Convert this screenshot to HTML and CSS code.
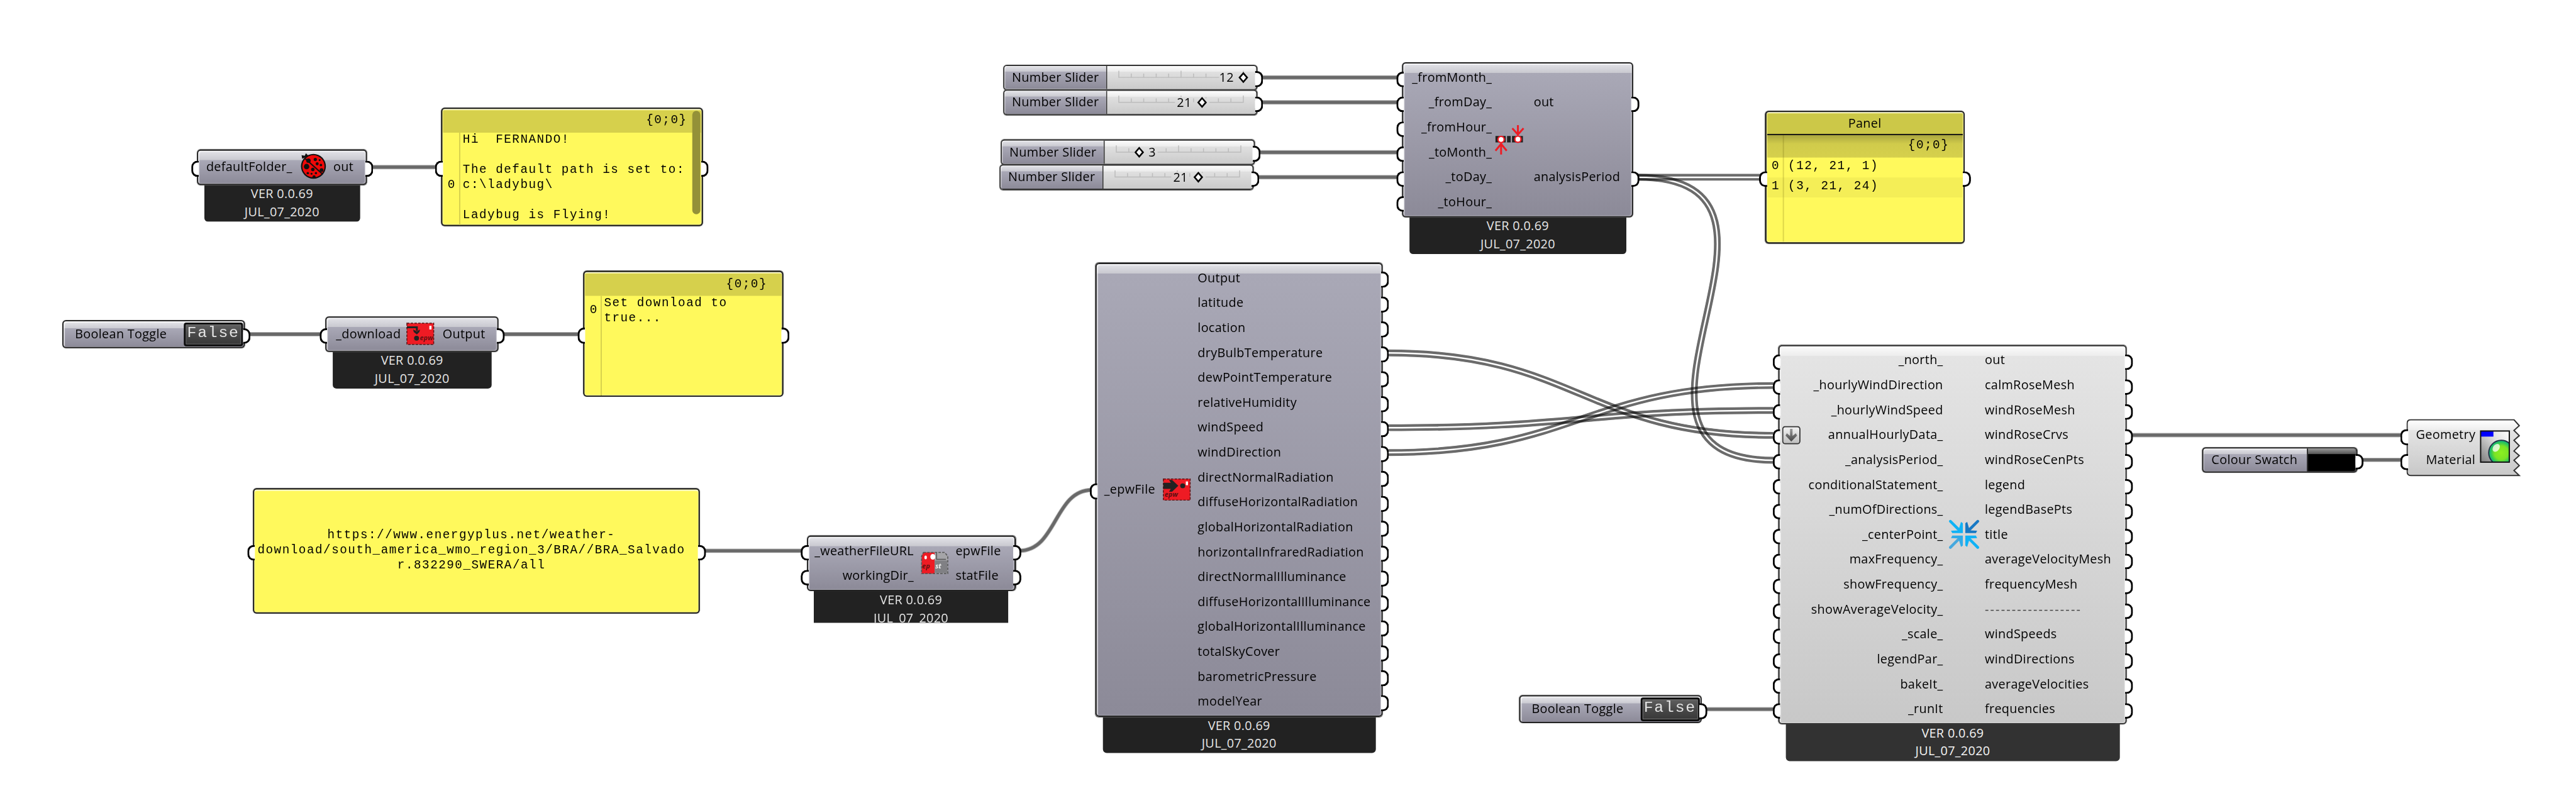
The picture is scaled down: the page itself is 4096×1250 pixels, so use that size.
FILE: index.html
```html
<!DOCTYPE html>
<html lang="en">
<head>
<meta charset="utf-8">
<title>Ladybug wind rose definition</title>
<link rel="stylesheet" href="styles.css">
</head>
<body>
<main class="canvas">

<svg class="wires" viewBox="0 0 4134 1262" width="4134" height="1262" aria-hidden="true">
  <defs>
    <path id="w-panel" d="M2628 284.6H2825"/>
    <path id="w-period" d="M2628 284.6C2948 284.6 2527 739 2847 739"/>
    <path id="w-dry" d="M2228 566.7C2530 566.7 2544 699 2846 699"/>
    <path id="w-speed" d="M2228 686.7C2530 686.7 2544 659 2846 659"/>
    <path id="w-dir" d="M2228 726.7C2530 726.7 2544 619 2846 619"/>
    <mask id="m-panel" maskUnits="userSpaceOnUse" x="0" y="0" width="4134" height="1262"><use href="#w-panel" class="keep"/><use href="#w-panel" class="cut"/></mask>
    <mask id="m-period" maskUnits="userSpaceOnUse" x="0" y="0" width="4134" height="1262"><use href="#w-period" class="keep"/><use href="#w-period" class="cut"/></mask>
    <mask id="m-dry" maskUnits="userSpaceOnUse" x="0" y="0" width="4134" height="1262"><use href="#w-dry" class="keep"/><use href="#w-dry" class="cut"/></mask>
    <mask id="m-speed" maskUnits="userSpaceOnUse" x="0" y="0" width="4134" height="1262"><use href="#w-speed" class="keep"/><use href="#w-speed" class="cut"/></mask>
    <mask id="m-dir" maskUnits="userSpaceOnUse" x="0" y="0" width="4134" height="1262"><use href="#w-dir" class="keep"/><use href="#w-dir" class="cut"/></mask>
    <path id="singles" d="M596 268.3H702M398 536.6H516M806 536.6H930M1129 884.3H1288M2023 124.4H2244M2023 164.4H2244M2019 244.5H2244M2017 284.5H2244M2737 1138.7H2848M3419 698.6H3856M3789 738.4H3856M1636 884.3C1696 884.3 1692 786.7 1752 786.7"/>
  </defs>
  <use href="#singles" class="wire-edge"/>
  <use href="#singles" class="wire"/>
  <g class="list-wire">
    <g mask="url(#m-panel)"><use href="#w-panel"/></g>
    <g mask="url(#m-period)"><use href="#w-period"/></g>
    <g mask="url(#m-dry)"><use href="#w-dry"/></g>
    <g mask="url(#m-speed)"><use href="#w-speed"/></g>
    <g mask="url(#m-dir)"><use href="#w-dir"/></g>
  </g>
</svg>

<section class="component default-folder">
  <div class="body">
    <div class="ports inputs"><div class="port in">defaultFolder_</div></div>
    <svg class="icon" viewBox="0 0 44 44" width="44" height="44">
      <path d="M5 10 4 4l5 1 2-4 4 4" fill="#111"/>
      <circle cx="23" cy="22" r="20" fill="#111"/>
      <circle cx="23" cy="22" r="17.8" fill="#f00808"/>
      <path d="M10 10 38 35" stroke="#111" stroke-width="2"/>
      <g fill="#111"><circle cx="15" cy="13" r="3.6"/><circle cx="26" cy="11" r="2.6"/><circle cx="29" cy="18" r="2.4"/><circle cx="12" cy="22.500" r="4.4"/><circle cx="22" cy="27" r="2.800"/><circle cx="14" cy="33" r="2"/><circle cx="20" cy="34" r="1.600"/><circle cx="35" cy="20" r="2"/><circle cx="36" cy="28" r="3"/><circle cx="27" cy="33" r="1.800"/><circle cx="24" cy="39" r="2.500"/><circle cx="33" cy="12" r="1.600"/></g>
    </svg>
    <div class="ports outputs"><div class="port out">out</div></div>
  </div>
  <div class="version"><span>VER 0.0.69</span><span>JUL_07_2020</span></div>
</section>

<section class="panel panel-folder grip-in grip-out">
  <div class="path">{0;0}</div>
  <div class="item"><span class="index">0</span><pre>Hi  FERNANDO!

The default path is set to:
c:\ladybug\

Ladybug is Flying!</pre></div>
  <div class="scrollbar"></div>
</section>

<section class="toggle toggle-download grip-out"><span>Boolean Toggle</span><b>False</b></section>

<section class="component download">
  <div class="body">
    <div class="ports inputs"><div class="port in">_download</div></div>
    <svg class="icon" viewBox="0 0 45 36" width="45" height="36">
      <rect x="1" y="1" width="43" height="34" fill="#ee1b24" stroke="#5b1416" stroke-width="1.500" stroke-dasharray="4 2"/>
      <path d="M1 7.500H17V13" fill="none" stroke="#222" stroke-width="3"/><path d="M11 11 17 14 22 11 21 15 17 19 12 15Z" fill="#222"/>
      <circle cx="16.500" cy="25" r="4" fill="#222"/><rect x="37" y="5" width="3.500" height="6" fill="#fff"/>
      <text x="22" y="28" class="icon-text">epw</text>
    </svg>
    <div class="ports outputs"><div class="port out">Output</div></div>
  </div>
  <div class="version"><span>VER 0.0.69</span><span>JUL_07_2020</span></div>
</section>

<section class="panel panel-download grip-in grip-out">
  <div class="path">{0;0}</div>
  <div class="item"><span class="index">0</span><pre>Set download to
true...</pre></div>
</section>

<section class="panel panel-url grip-in grip-out">
  <pre>https://www.energyplus.net/weather-
download/south_america_wmo_region_3/BRA//BRA_Salvado
r.832290_SWERA/all</pre>
</section>

<section class="component weather">
  <div class="body">
    <div class="ports inputs"><div class="port in">_weatherFileURL</div><div class="port in">workingDir_</div></div>
    <svg class="icon" viewBox="0 0 44 36" width="44" height="36">
      <path d="M4 1H22V35H1V7Z" fill="#ee1b24"/><path d="M22 1H38L43 7V35H22Z" fill="#a5a5a8"/>
      <path d="M22 14H42V34H22Z" fill="#808084"/>
      <path d="M4 1H38L43 7V35H1V7Z" fill="none" stroke="#555" stroke-width="1.600" stroke-dasharray="4 2"/>
      <path d="M25 1V12H40" fill="none" stroke="#555" stroke-width="1.500"/>
      <ellipse cx="7.500" cy="9" rx="2" ry="3" fill="#fff"/><ellipse cx="19" cy="8" rx="4" ry="4.500" fill="#fff"/>
      <text x="2" y="27" class="icon-text">ep</text><text x="23" y="27" class="icon-text light">st</text>
    </svg>
    <div class="ports outputs"><div class="port out">epwFile</div><div class="port out">statFile</div></div>
  </div>
  <div class="version"><span>VER 0.0.69</span><span>JUL_07_2020</span></div>
</section>

<section class="slider slider-a grip-out"><span>Number Slider</span>
  <svg viewBox="0 0 240 40" width="240" height="40"><path class="ticks" d="M19.500 9.500V20.300H181M39.600 14V20M59.600 14V20M79.700 14V20M99.700 14V20M119.700 9.500V20M139.800 14V20M159.800 14V20M219.900 9.500V13"/><path class="knob" d="M219.900 13.500 226 20.500 219.900 27.500 213.800 20.500Z"/><text x="181" y="27.500">12</text></svg>
</section>
<section class="slider slider-b grip-out"><span>Number Slider</span>
  <svg viewBox="0 0 240 40" width="240" height="40"><path class="ticks" d="M19.500 9.500V20.300H110M39.600 14V20M59.600 14V20M79.700 14V20M99.700 14V20M119.700 9.500V12M139.800 14V20M165 20.300H219.900V9.500M179.800 14V20M199.900 14V20M159.800 12V14"/><path class="knob" d="M153.500 13.500 159.600 20.500 153.500 27.500 147.400 20.500Z"/><text x="113" y="27.500">21</text></svg>
</section>
<section class="slider slider-c grip-out"><span>Number Slider</span>
  <svg viewBox="0 0 240 40" width="240" height="40"><path class="ticks" d="M19.500 9.500V20.300H48M39.600 14V20M86 20.300H219.900V9.500M99.700 14V20M119.700 9.500V20M139.800 14V20M159.800 14V20M179.800 14V20M199.900 14V20"/><path class="knob" d="M56.400 13.500 62.500 20.500 56.400 27.500 50.300 20.500Z"/><text x="71.500" y="27.500">3</text></svg>
</section>
<section class="slider slider-d grip-out"><span>Number Slider</span>
  <svg viewBox="0 0 240 40" width="240" height="40"><path class="ticks" d="M19.500 9.500V20.300H110M39.600 14V20M59.600 14V20M79.700 14V20M99.700 14V20M119.700 9.500V12M139.800 14V20M165 20.300H219.900V9.500M179.800 14V20M199.900 14V20M159.800 12V14"/><path class="knob" d="M153.500 13.500 159.600 20.500 153.500 27.500 147.400 20.500Z"/><text x="113" y="27.500">21</text></svg>
</section>

<section class="component period">
  <div class="body">
    <div class="ports inputs"><div class="port in">_fromMonth_</div><div class="port in">_fromDay_</div><div class="port in">_fromHour_</div><div class="port in">_toMonth_</div><div class="port in">_toDay_</div><div class="port in">_toHour_</div></div>
    <svg class="icon" viewBox="0 0 48 48" width="48" height="48">
      <path d="M1 22.500H45" stroke="#222" stroke-width="10.500"/><path d="M18.500 17V28M26.500 17V28" stroke="#aaa8b4" stroke-width="2"/>
      <path d="M37 0V13M28 5 37 15 46 5M10 47V32M1 41 10 30 19 41" fill="none" stroke="#ee1b24" stroke-width="3"/>
      <circle cx="10" cy="23" r="5" fill="#fff" stroke="#ee1b24" stroke-width="2.400"/><circle cx="37" cy="22.500" r="5" fill="#fff" stroke="#ee1b24" stroke-width="2.400"/>
    </svg>
    <div class="ports outputs"><div class="port out">out</div><div class="port out">analysisPeriod</div></div>
  </div>
  <div class="version"><span>VER 0.0.69</span><span>JUL_07_2020</span></div>
</section>

<section class="panel panel-period grip-in grip-out">
  <div class="title">Panel</div>
  <div class="path">{0;0}</div>
  <div class="item"><span class="index">0</span><pre>(12, 21, 1)</pre></div>
  <div class="item odd"><span class="index">1</span><pre>(3, 21, 24)</pre></div>
  <div class="gutter"></div>
</section>

<section class="component epw">
  <div class="body">
    <div class="ports inputs"><div class="port in">_epwFile</div></div>
    <svg class="icon" viewBox="0 0 45 36" width="45" height="36">
      <rect x="1" y="1" width="43" height="34" fill="#ee1b24" stroke="#5b1416" stroke-width="1.500" stroke-dasharray="4 2"/>
      <path d="M1 7H13L10 2.500H15L25 12 15 21.500H10L13 17H1Z" fill="#222"/>
      <circle cx="32" cy="12" r="4" fill="#222"/><rect x="37" y="5" width="3.500" height="6" fill="#fff"/>
      <text x="3" y="30" class="icon-text">epw</text>
    </svg>
    <div class="ports outputs"><div class="port out">Output</div><div class="port out">latitude</div><div class="port out">location</div><div class="port out">dryBulbTemperature</div><div class="port out">dewPointTemperature</div><div class="port out">relativeHumidity</div><div class="port out">windSpeed</div><div class="port out">windDirection</div><div class="port out">directNormalRadiation</div><div class="port out">diffuseHorizontalRadiation</div><div class="port out">globalHorizontalRadiation</div><div class="port out">horizontalInfraredRadiation</div><div class="port out">directNormalIlluminance</div><div class="port out">diffuseHorizontalIlluminance</div><div class="port out">globalHorizontalIlluminance</div><div class="port out">totalSkyCover</div><div class="port out">barometricPressure</div><div class="port out">modelYear</div></div>
  </div>
  <div class="version"><span>VER 0.0.69</span><span>JUL_07_2020</span></div>
</section>

<section class="toggle toggle-run grip-out"><span>Boolean Toggle</span><b>False</b></section>

<section class="component rose pale">
  <div class="body">
    <div class="ports inputs"><div class="port in">_north_</div><div class="port in">_hourlyWindDirection</div><div class="port in">_hourlyWindSpeed</div><div class="port in"><svg class="flatten" viewBox="0 0 30 30" width="30" height="30"><defs><linearGradient id="btn" x2="0" y2="1"><stop stop-color="#f4f4f4"/><stop offset="1" stop-color="#bdbdbd"/></linearGradient><linearGradient id="arr" x2="0" y2="1"><stop stop-color="#999"/><stop offset="1" stop-color="#444"/></linearGradient></defs><rect x="1" y="1" width="27.500" height="27.500" rx="4" fill="url(#btn)" stroke="#333" stroke-width="1.800"/><path d="M12.700 4.500H16.700V16L22 11.500 24 15.500 14.700 25 5.500 15.500 7.500 11.500 12.700 16Z" fill="url(#arr)"/></svg>annualHourlyData_</div><div class="port in">_analysisPeriod_</div><div class="port in">conditionalStatement_</div><div class="port in">_numOfDirections_</div><div class="port in">_centerPoint_</div><div class="port in">maxFrequency_</div><div class="port in">showFrequency_</div><div class="port in">showAverageVelocity_</div><div class="port in">_scale_</div><div class="port in">legendPar_</div><div class="port in">bakeIt_</div><div class="port in">_runIt</div></div>
    <svg class="icon" viewBox="0 0 48 48" width="48" height="48">
      <path d="M2 3 15 16" stroke="#0fb2f6" stroke-width="4.500" stroke-linecap="round"/><path d="M19 4 22 6V22H5L3 18 15 17.500Z" fill="#0fb2f6"/>
      <path d="M46 3 33 16" stroke="#1678c4" stroke-width="4.500" stroke-linecap="round"/><path d="M29 4 26 6V22H43L45 18 33 17.500Z" fill="#1678c4"/>
      <path d="M2 45 15 32" stroke="#46a8de" stroke-width="4.500" stroke-linecap="round"/><path d="M19 44 22 42V26H5L3 30 15 30.500Z" fill="#2fabe8"/>
      <path d="M46 45 33 32" stroke="#0fb2f6" stroke-width="4.500" stroke-linecap="round"/><path d="M29 44 26 42V26H43L45 30 33 30.500Z" fill="#0fb2f6"/>
    </svg>
    <div class="ports outputs"><div class="port out">out</div><div class="port out">calmRoseMesh</div><div class="port out">windRoseMesh</div><div class="port out">windRoseCrvs</div><div class="port out">windRoseCenPts</div><div class="port out">legend</div><div class="port out">legendBasePts</div><div class="port out">title</div><div class="port out">averageVelocityMesh</div><div class="port out">frequencyMesh</div><div class="port out dashes">------------------</div><div class="port out">windSpeeds</div><div class="port out">windDirections</div><div class="port out">averageVelocities</div><div class="port out">frequencies</div></div>
  </div>
  <div class="version"><span>VER 0.0.69</span><span>JUL_07_2020</span></div>
</section>

<section class="swatch grip-out"><span>Colour Swatch</span><i></i></section>

<section class="preview">
  <svg class="torn" viewBox="0 0 184 92" width="184" height="92">
    <defs>
      <linearGradient id="pale" x2="0" y2="1"><stop stop-color="#fff"/><stop offset=".18" stop-color="#eee"/><stop offset=".19" stop-color="#e4e4e4"/><stop offset="1" stop-color="#c8c8c8"/></linearGradient>
    </defs>
    <path d="M7 1H172.500L181 10.500 172.500 18 181 26.500 172.500 34 181 42.500 172.500 51 181 58.500 172.500 66 181 74.500 172.500 82.500 181 90.500H7Q1 90.500 1 84.500V7Q1 1 7 1Z" fill="url(#pale)" stroke="#333" stroke-width="2"/>
  </svg>
  <div class="ports inputs"><div class="port in">Geometry</div><div class="port in">Material</div></div>
  <svg class="icon" viewBox="0 0 48 52" width="48" height="52">
    <defs>
      <linearGradient id="bg" x1="0" y1="1" x2="1" y2="0"><stop stop-color="#7c7c7c"/><stop offset=".6" stop-color="#ddd"/><stop offset="1" stop-color="#fff"/></linearGradient>
      <radialGradient id="ball" cx=".5" cy=".5" r=".55"><stop stop-color="#8cf020"/><stop offset=".5" stop-color="#7be425"/><stop offset=".8" stop-color="#1fbf62"/><stop offset="1" stop-color="#19c8d0"/></radialGradient>
      <clipPath id="clip"><rect x="1" y="1" width="46" height="50"/></clipPath>
    </defs>
    <rect x="1" y="1" width="46" height="50" fill="url(#bg)"/><rect x="1" y="1" width="20.500" height="9" fill="#00f"/>
    <g clip-path="url(#clip)"><circle cx="34" cy="36" r="20" fill="url(#ball)" stroke="#234" stroke-width="2"/><ellipse cx="26" cy="28" rx="5" ry="7" transform="rotate(38 26 28)" fill="#fff" opacity=".75"/></g>
    <rect x="1" y="1" width="46" height="50" fill="none" stroke="#111" stroke-width="2"/>
  </svg>
</section>

</main>
</body>
</html>
```
FILE: styles.css
```css
* { box-sizing: border-box; }

body {
  margin: 0;
  width: 4096px;
  height: 1250px;
  overflow: hidden;
  background: #fff;
}

.canvas {
  position: relative;
  width: 4134px;
  height: 1262px;
  transform: scale(.9908, .9905);
  transform-origin: 0 0;
  font: 20px/28.7px "Open Sans", "Noto Sans", sans-serif;
  letter-spacing: .32px;
  color: #000;
}

/* wires */
.wires { position: absolute; left: 0; top: 0; fill: none; }
.wire-edge { stroke: #b4b4b4; stroke-width: 7; }
.wire { stroke: #696969; stroke-width: 5; }
.list-wire { stroke: #000; stroke-opacity: .58; stroke-width: 11; }
.keep { stroke: #fff; stroke-opacity: 1; stroke-width: 12; }
.cut { stroke: #000; stroke-opacity: 1; stroke-width: 2.5; }

/* nodes on the canvas */
.component, .panel, .toggle, .slider, .swatch, .preview { position: absolute; }

.default-folder { left: 316px; top: 239.5px; width: 273px; }
.download { left: 522.3px; top: 507.7px; width: 278px; }
.weather { left: 1294.5px; top: 859.7px; width: 335px; }
.period { left: 2250.3px; top: 100px; width: 371px; }
.epw { left: 1758px; top: 422px; width: 461px; }
.rose { left: 2854.3px; top: 554px; width: 559px; }

.body {
  display: grid;
  position: relative;
  border: 2px solid #222;
  border-radius: 6px;
  background: linear-gradient(#e3e3e8, #c9c9d0 15px, #a9a8b6 15.5px, #8c8a98);
  box-shadow: inset 2px 2px 1px rgba(255,255,255,.6), inset -2px -1px 1px rgba(255,255,255,.25), 0 0 1px #555;
}
.pale .body {
  border-color: #333;
  background: linear-gradient(#fbfbfb, #ededed 15px, #e4e4e4 15.5px, #c8c8c8);
}
.default-folder .body { height: 57.5px; grid-template-columns: 151px 66px 1fr; }
.download .body { height: 57.5px; grid-template-columns: 119px 66px 1fr; }
.weather .body { height: 89.5px; grid-template-columns: 170px 67px 1fr; }
.period .body { height: 249px; grid-template-columns: 142px 67px 1fr; }
.epw .body { height: 728.5px; grid-template-columns: 94px 68px 1fr; }
.rose .body { height: 609px; grid-template-columns: 262px 67px 1fr; }

.ports { display: flex; flex-direction: column; justify-content: center; }
.port {
  position: relative;
  display: flex;
  align-items: center;
  height: 40px;
  white-space: nowrap;
}
.in { justify-content: flex-end; }
.download .out { padding-left: 1px; }
.period .outputs { padding-top: 42.5px; justify-content: flex-start; gap: 80px; }
.dashes { letter-spacing: 2.2px; color: #444; }
.icon { place-self: center; overflow: visible; }
.default-folder .icon { margin-top: -3px; }
.download .icon { margin-left: -3px; }
.period .icon { margin-left: -9px; }
.rose .icon { margin: -1px 0 0 0; }
.flatten { position: absolute; left: 3.5px; top: 5px; }
.icon-text { font: italic bold 11px "Open Sans", sans-serif; fill: #5c1012; letter-spacing: 0; }
.icon-text.light { fill: #eee; }

/* half-circle grips */
.in::before, .out::after, .grip-in::before, .grip-out::after {
  content: "";
  position: absolute;
  top: calc(50% - 9.9px);
  width: 9.7px;
  height: 19.8px;
  border: 3.4px solid #000;
  background: #fff;
}
.in::before, .grip-in::before { left: -11.5px; border-right: 0; border-radius: 10px 0 0 10px; }
.out::after, .grip-out::after { right: -11.5px; border-left: 0; border-radius: 0 10px 10px 0; }

.version {
  display: flex;
  flex-direction: column;
  align-items: center;
  height: 58.5px;
  margin: 0 11.5px;
  border-radius: 0 0 6px 6px;
  background: #222;
  color: #e6e6e6;
}
.pale .version { background: #323232; color: #f4f4f4; }
.weather .version { height: 51px; overflow: hidden; border-radius: 0; }

/* text panels */
.panel {
  display: flex;
  flex-direction: column;
  border: 2px solid #222;
  border-radius: 6px;
  background: #fff95c;
  box-shadow: inset 0 2px 1px #fffde0, inset 0 0 0 1px rgba(255,255,255,.4), 0 0 1px #555;
  font: 19.5px/24.15px "Courier New", "Liberation Mono", monospace;
  letter-spacing: 1.5px;
}
.panel pre { margin: 0; font: inherit; }
.path { text-align: right; background: #d6d04c; margin: 2px 1px 0; }
.item { display: grid; margin: 0 1px; align-items: center; }
.index { text-align: center; letter-spacing: 0; }

.panel-folder { left: 707.7px; top: 173.3px; width: 420px; height: 190px; }
.panel-folder .path { height: 36px; padding: 5px 22px 0; line-height: 22px; }
.panel-folder .item { grid-template-columns: 27px 1fr; flex: 1; align-items: start; background: linear-gradient(90deg, transparent 26px, #d8d24e 26px, #d8d24e 27.5px, transparent 27.5px); }
.panel-folder .index { padding-top: 72px; }
.panel-folder pre { padding-left: 5px; margin-top: -1px; }
.scrollbar { position: absolute; right: 2px; top: 3px; width: 13px; height: 166px; border-radius: 7px; background: #949138; }

.panel-download { left: 936.3px; top: 435.3px; width: 321px; height: 201.5px; }
.panel-download .path { height: 36px; padding: 6px 23px 0; line-height: 22px; }
.panel-download .item { grid-template-columns: 26px 1fr; flex: 1; align-items: start; background: linear-gradient(90deg, transparent 25px, #d8d24e 25px, #d8d24e 26.5px, transparent 26.5px); }
.panel-download .index { padding-top: 11px; }
.panel-download pre { padding-left: 4px; }

.panel-url { left: 406px; top: 783.7px; width: 717px; height: 201.5px; justify-content: center; text-align: center; padding: 0 16px 2px 0; }

.panel-period { left: 2832.5px; top: 178px; width: 320.5px; height: 213px; }
.title {
  height: 35px;
  margin: 2px 1px 0;
  border-bottom: 2.5px solid #111;
  background: #ccc848;
  text-align: center;
  font: 20px/31px "Open Sans", "Noto Sans", sans-serif;
  letter-spacing: .32px;
}
.panel-period .path { height: 36px; margin-top: 0; padding: 5px 22px 0; line-height: 22px; background: linear-gradient(#aaa63f, #d0cb4b 14px, #d6d04c); }
.panel-period .item { grid-template-columns: 27px 1fr; height: 32px; padding-bottom: 3px; }
.panel-period .odd { background: #f4ee57; }
.panel-period pre { padding-left: 7px; }
.gutter { position: absolute; left: 26.5px; top: 37px; bottom: 1px; width: 1.5px; background: rgba(90,80,0,.2); }

/* boolean toggles */
.toggle {
  display: flex;
  align-items: center;
  width: 292.5px;
  height: 45px;
  padding: 0 1px 0 18px;
  border: 2px solid #222;
  border-radius: 6px;
  background: linear-gradient(#e6e6ea, #cbcbd2 11px, #a9a8b6 11.5px, #8c8a98);
  box-shadow: inset 2px 2px 1px rgba(255,255,255,.7), 0 0 1px #555;
}
.toggle span { flex: 1; }
.toggle b {
  width: 95px;
  height: 38px;
  border: 3px solid #0c0c0c;
  border-radius: 4px;
  background: linear-gradient(#606060, #4a4a4a 45%, #383838);
  box-shadow: inset 0 0 0 1px #777;
  color: #e4e4e4;
  text-align: center;
  font: 25px/28px "Courier New", "Liberation Mono", monospace;
  letter-spacing: 1.8px;
}
.toggle-download { left: 100.3px; top: 514px; }
.toggle-run { left: 2438px; top: 1116.3px; }

/* number sliders */
.slider {
  display: flex;
  width: 407.5px;
  height: 40.5px;
  border: 2px solid #333;
  border-radius: 6px;
  background: linear-gradient(#fcfcfc, #ececec 9px, #e0e0e0 9.5px, #cacaca);
  box-shadow: inset 0 1px 1px #fff, 0 0 1px #555;
}
.slider span {
  width: 165.5px;
  padding-left: 12px;
  line-height: 36px;
  border-right: 2px solid #333;
  border-radius: 4px 0 0 4px;
  background: linear-gradient(#e3e3e8, #c9c9d0 9px, #a9a8b6 9.5px, #8c8a98);
  box-shadow: inset 1px 1px 1px rgba(255,255,255,.7);
}
.slider svg { margin: -2px 0 0 -1px; }
.slider text { font-size: 20px; }
.ticks { fill: none; stroke: #bcbcbc; stroke-width: 1.5; }
.knob { fill: #fff; stroke: #000; stroke-width: 2.6; }
.slider-a { left: 1610px; top: 104px; }
.slider-b { left: 1610px; top: 144.3px; }
.slider-c { left: 1606px; top: 224px; }
.slider-d { left: 1604px; top: 264.3px; }

/* colour swatch */
.swatch {
  display: flex;
  left: 3534px;
  top: 718px;
  width: 249px;
  height: 41px;
  border: 2px solid #222;
  border-radius: 6px;
  background: linear-gradient(#e3e3e8, #c9c9d0 9px, #a9a8b6 9.5px, #8c8a98);
  box-shadow: inset 1px 2px 1px rgba(255,255,255,.6), 0 0 1px #555;
}
.swatch span { width: 166px; padding-left: 13px; line-height: 36px; }
.swatch i {
  flex: 1;
  border-left: 2px solid #222;
  border-radius: 0 4px 4px 0;
  background: linear-gradient(#999, #555 9px, #000 9.5px);
  box-shadow: inset -1px 0 1px #666;
}

/* custom preview */
.preview { display: grid; grid-template-columns: 112px 57px; left: 3861.7px; top: 673.3px; width: 184px; height: 92px; }
.torn { position: absolute; left: 0; top: 0; }
.preview .ports { position: relative; top: -.5px; }
.preview .in { padding-right: 1px; }
.preview .in::before { left: -9.5px; }
.preview .icon { position: relative; margin: -4px 0 0 4px; }
```
